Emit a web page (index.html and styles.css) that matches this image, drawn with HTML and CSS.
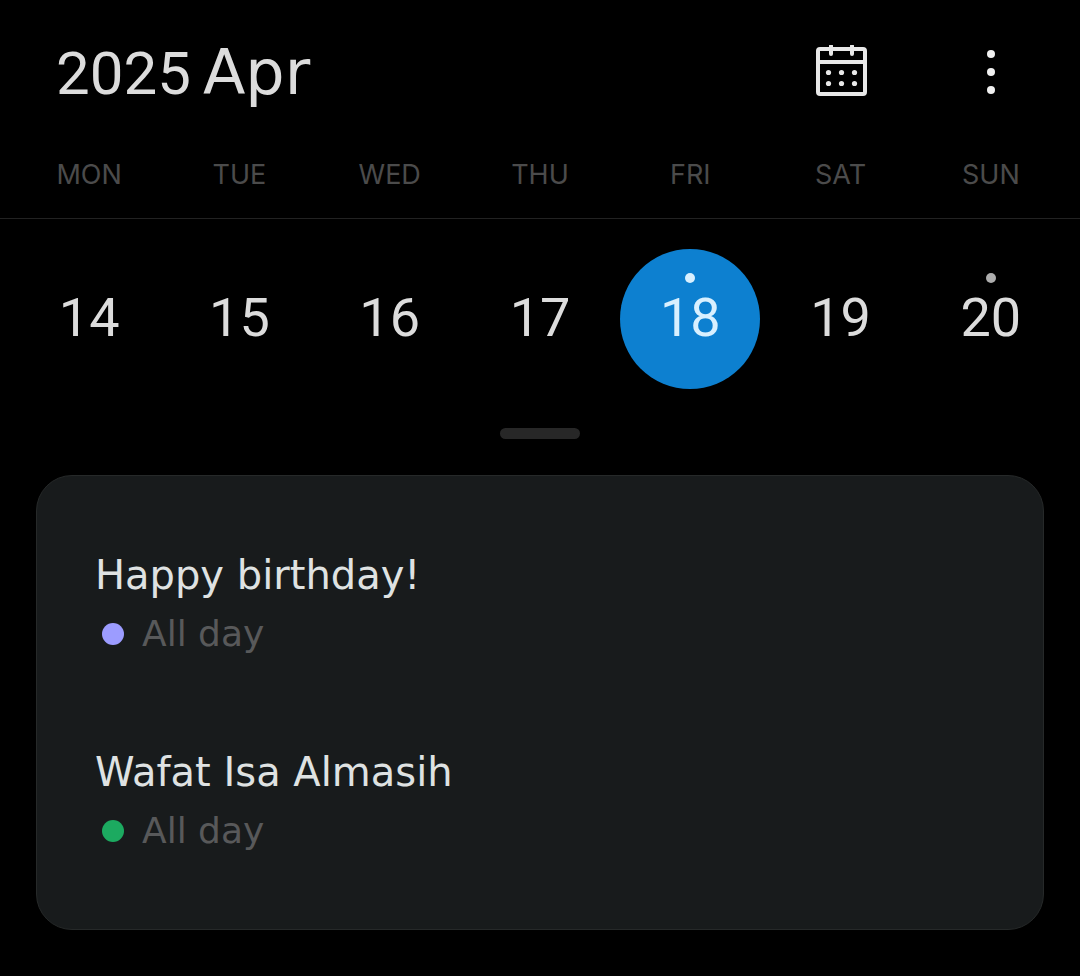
FILE: index.html
```html
<!DOCTYPE html>
<html lang="en">
<head>
<meta charset="utf-8">
<meta name="viewport" content="width=device-width, initial-scale=1">
<title>Calendar</title>
<link rel="stylesheet" href="styles.css">
</head>
<body>
<header class="topbar">
  <h1 class="title"><span class="year">2025</span> <span class="month">Apr</span></h1>
  <div class="actions">
    <button class="icon-button" type="button" aria-label="Month view">
      <svg width="52" height="54" viewBox="0 0 52 54" fill="none" stroke="#e8e8e8" stroke-width="4">
        <rect x="3" y="4" width="47" height="45" rx="2"/>
        <path d="M3 17h47"/>
        <path d="M16 1v8M37 1v8" stroke-linecap="round"/>
        <g fill="#e8e8e8" stroke="none">
          <circle cx="13.500" cy="27.500" r="2.600"/><circle cx="26.500" cy="27.500" r="2.600"/><circle cx="39.500" cy="27.500" r="2.600"/>
          <circle cx="13.500" cy="38.500" r="2.600"/><circle cx="26.500" cy="38.500" r="2.600"/><circle cx="39.500" cy="38.500" r="2.600"/>
        </g>
      </svg>
    </button>
    <button class="icon-button" type="button" aria-label="More options">
      <svg width="8" height="44" viewBox="0 0 8 44" fill="#f0f0f0"><circle cx="4" cy="4" r="4"/><circle cx="4" cy="22" r="4"/><circle cx="4" cy="40" r="4"/></svg>
    </button>
  </div>
</header>
<div class="week weekdays">
  <span>MON</span><span>TUE</span><span>WED</span><span>THU</span><span>FRI</span><span>SAT</span><span>SUN</span>
</div>
<div class="week days">
  <button class="day" type="button"><span class="mark"></span>14</button>
  <button class="day" type="button"><span class="mark"></span>15</button>
  <button class="day" type="button"><span class="mark"></span>16</button>
  <button class="day" type="button"><span class="mark"></span>17</button>
  <button class="day selected" type="button" aria-current="date"><span class="mark event"></span>18</button>
  <button class="day" type="button"><span class="mark"></span>19</button>
  <button class="day" type="button"><span class="mark event"></span>20</button>
</div>
<button class="handle" type="button" aria-label="Expand calendar"></button>
<main class="card">
  <article class="entry">
    <h2 class="entry-title">Happy birthday!</h2>
    <p class="entry-time"><span class="dot violet"></span>All day</p>
  </article>
  <article class="entry">
    <h2 class="entry-title">Wafat Isa Almasih</h2>
    <p class="entry-time"><span class="dot green"></span>All day</p>
  </article>
</main>
</body>
</html>
```
FILE: styles.css
```css
* { box-sizing: border-box; }
body {
  margin: 0;
  background: #000;
  color: #dcdcdc;
  font-family: "DejaVu Sans", sans-serif;
}
button {
  padding: 0;
  border: 0;
  background: none;
  color: inherit;
  font: inherit;
  cursor: pointer;
}
h1, h2, p { margin: 0; font-weight: 400; }
.topbar {
  display: flex;
  justify-content: space-between;
  align-items: flex-start;
  padding: 36px 14px 0 56px;
}
.title {
  display: flex;
  align-items: baseline;
  gap: 12px;
  font-size: 62px;
  line-height: 74px;
}
.year { font-family: Roboto, sans-serif; font-size: 60px; }
.actions { display: flex; }
.icon-button {
  display: flex;
  justify-content: center;
  width: 150px;
  height: 72px;
  align-items: center;
}
.week {
  display: grid;
  grid-template-columns: repeat(7, 1fr);
  padding: 0 14px;
  text-align: center;
}
.weekdays {
  padding-top: 47px;
  height: 108px;
  border-bottom: 1px solid #222;
  color: #4b4b4b;
  font-family: Inter, "Liberation Sans", sans-serif;
  font-size: 27px;
  line-height: 34px;
}
.days { padding-top: 30px; justify-items: center; }
.day {
  display: flex;
  flex-direction: column;
  align-items: center;
  width: 140px;
  height: 140px;
  padding-top: 24px;
  border-radius: 50%;
  font-family: Roboto, sans-serif;
  font-size: 54px;
  line-height: 70px;
}
.selected { background: #0d80d0; color: #d8f0ff; }
.mark { width: 10px; height: 10px; border-radius: 50%; }
.event { background: #adadad; }
.selected .event { background: #d8f0ff; }
.handle {
  display: block;
  width: 80px;
  height: 11px;
  margin: 39px auto 36px;
  border-radius: 6px;
  background: #272727;
}
.card {
  display: flex;
  flex-direction: column;
  gap: 89px;
  margin: 0 36px 47px;
  padding: 74px 58px;
  border: 1px solid #262929;
  border-radius: 36px;
  background: #181b1c;
}
.entry-title { color: #dfe2e2; font-size: 40px; line-height: 50px; }
.entry-time {
  display: flex;
  align-items: center;
  gap: 18px;
  margin-top: 10px;
  padding-left: 7px;
  color: #58595a;
  font-size: 36px;
  line-height: 48px;
}
.dot { width: 22px; height: 22px; border-radius: 50%; }
.violet { background: #9c9cff; }
.green { background: #1caa60; }
```
